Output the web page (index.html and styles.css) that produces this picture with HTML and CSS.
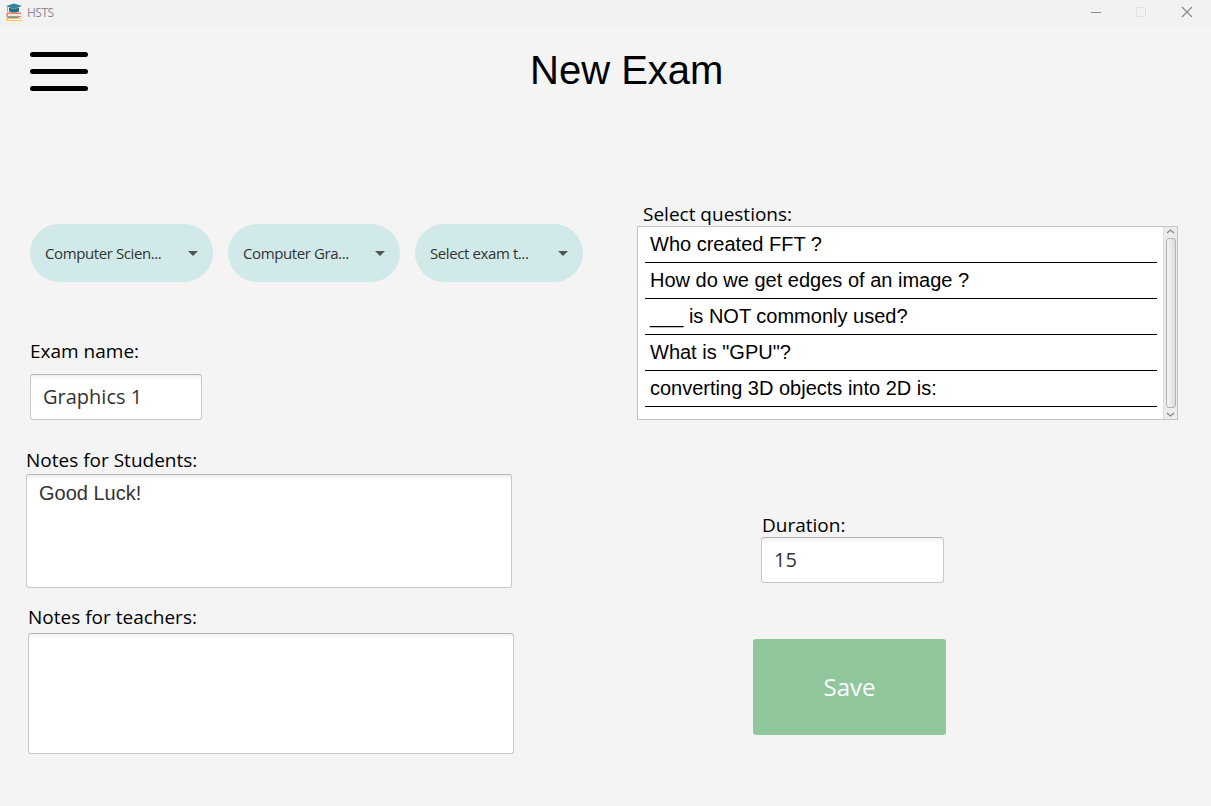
FILE: index.html
```html
<!DOCTYPE html>
<html lang="en">
<head>
<meta charset="utf-8">
<title>HSTS</title>
<link rel="stylesheet" href="styles.css">
</head>
<body>
<div class="titlebar">
  <svg class="app-icon" width="18" height="18" viewBox="0 0 18 18">
    <path d="M1 3 9 .5 17 3 9 6z" fill="#35849b"/>
    <path d="M4 4.5 9 6l5-1.500v4Q9 11 4 8.500z" fill="#276f88"/>
    <path d="M2.500 4v5" stroke="#e0a13b" stroke-width="1"/>
    <path d="M2 9.500h14v1.500H3v2h13v1H2q-1.500-2.200 0-4.500z" fill="#ee8168"/>
    <path d="M4 11h12v2H4z" fill="#f7e9dd"/>
    <path d="M2 14h12v1.500H2z" fill="#4fa79c"/>
    <path d="M1 15h16v1H3v1h14v1H1z" fill="#f2cd70"/>
    <path d="M3 16h13v1H3z" fill="#fff5d5"/>
  </svg>
  <span class="app-name">HSTS</span>
  <svg class="window-controls" width="106" height="14" viewBox="0 0 106 14" fill="none">
    <path d="M1 6.500h10" stroke="#8b8b8b"/>
    <rect x="46.500" y="1.500" width="9" height="9" rx="1" stroke="#dedede"/>
    <path d="M92 1l10 10M102 1 92 11" stroke="#888" stroke-width="1.200"/>
  </svg>
</div>
<header class="header">
  <svg class="menu" width="58" height="40" viewBox="0 0 58 40">
    <path d="M2.500 2.500h53M2.500 19.500h53M2.500 36.500h53" stroke="#000" stroke-width="5" stroke-linecap="round"/>
  </svg>
  <h1 class="title">New Exam</h1>
</header>
<main class="main">
  <section class="details">
    <div class="pickers">
      <div class="picker picker-subject"><span class="pick-a">Computer Scien...</span><i class="arrow"></i></div>
      <div class="picker picker-course"><span class="pick-b">Computer Gra...</span><i class="arrow"></i></div>
      <div class="picker picker-type"><span class="pick-c">Select exam t...</span><i class="arrow"></i></div>
    </div>
    <div class="group name-group">
      <span class="label l-name">Exam name:</span>
      <div class="field name-field"><span class="v-name">Graphics 1</span></div>
    </div>
    <div class="group students-group">
      <span class="label l-students">Notes for Students:</span>
      <div class="field students-field"><span class="v-note">Good Luck!</span></div>
    </div>
    <div class="group teachers-group">
      <span class="label l-teachers">Notes for teachers:</span>
      <div class="field teachers-field"></div>
    </div>
  </section>
  <section class="exam">
    <span class="label l-questions">Select questions:</span>
    <div class="list">
      <ul class="questions">
        <li>Who created FFT ?</li>
        <li>How do we get edges of an image ?</li>
        <li>___ is NOT commonly used?</li>
        <li>What is "GPU"?</li>
        <li>converting 3D objects into 2D is:</li>
      </ul>
      <div class="scrollbar">
        <svg width="9" height="5" viewBox="0 0 9 5"><path d="M1 4 4.500 1 8 4" fill="none" stroke="#888" stroke-width="1.300"/></svg>
        <div class="thumb"></div>
        <svg width="9" height="5" viewBox="0 0 9 5"><path d="M1 1 4.500 4 8 1" fill="none" stroke="#888" stroke-width="1.300"/></svg>
      </div>
    </div>
    <div class="duration-group">
      <span class="label l-duration">Duration:</span>
      <div class="field duration-field"><span class="v-duration">15</span></div>
    </div>
    <button class="save"><span>Save</span></button>
  </section>
</main>
</body>
</html>
```

FILE: styles.css
```css
* { box-sizing: border-box; }
body {
  margin: 0;
  height: 806px;
  overflow: hidden;
  background: #f4f4f4;
  color: #000;
  font-family: "Open Sans", sans-serif;
}
.titlebar {
  display: flex;
  height: 28px;
  padding: 3px 15px 0 5px;
  background: #f2f2f2;
}
.app-name {
  margin-left: 4px;
  font-size: 12px;
  line-height: 19px;
  letter-spacing: -0.5px;
  color: #8b8b8b;
}
.window-controls { margin: 3px 0 0 auto; }
.header {
  display: flex;
  height: 172px;
  padding: 24px 0 0 30px;
}
.title {
  margin: -5px 0 0 442px;
  font: 40px/46px "Liberation Sans", Arial, sans-serif;
  white-space: nowrap;
}
.main { display: flex; }
.details { width: 637px; padding: 24px 0 0 26px; }
.pickers { display: flex; gap: 15px; padding-left: 4px; }
.picker {
  display: flex;
  align-items: center;
  justify-content: space-between;
  height: 58px;
  padding: 0 15px;
  border-radius: 29px;
  background: #d1e9e8;
  color: #333;
  font-size: 15px;
  white-space: nowrap;
}
.picker-subject { width: 183px; }
.picker-course { width: 172px; }
.picker-type { width: 168px; }
.pick-a, .pick-b, .pick-c { letter-spacing: -0.4px; }
.arrow {
  border: 5px solid transparent;
  border-top-color: #555;
  border-bottom: 0;
}
.group { display: flex; flex-direction: column; }
.label {
  display: block;
  font-size: 19px;
  line-height: 26px;
  white-space: nowrap;
}
.field {
  border: 1px solid #c8c8c8;
  border-top-color: #b5b5b5;
  border-radius: 3px;
  background: linear-gradient(#f0f0f0, #fff 5px);
  color: #333;
  font-size: 20px;
  line-height: 44px;
  padding-left: 12px;
}
.name-group { padding: 56px 0 0 4px; }
.name-field { width: 172px; height: 46px; margin-top: 10px; }
.students-group { padding-top: 27px; }
.students-field {
  width: 486px;
  height: 114px;
  margin-top: 1px;
  font: 20px/36px "Liberation Sans", Arial, sans-serif;
}
.teachers-group { padding: 16px 0 0 2px; }
.teachers-field { width: 486px; height: 121px; margin-top: 3px; }
.l-questions { margin: 1px 0 0 6px; height: 25px; }
.list {
  display: flex;
  width: 541px;
  height: 194px;
  border: 1px solid #c3c3c3;
  background: #fff;
}
.questions {
  flex: 1;
  margin: 0 6px 0 7px;
  padding: 0;
  list-style: none;
  font: 20px/35px "Liberation Sans", Arial, sans-serif;
}
.questions li {
  height: 36px;
  padding-left: 5px;
  border-bottom: 1px solid #000;
}
.scrollbar {
  display: flex;
  flex-direction: column;
  align-items: center;
  justify-content: space-between;
  width: 14px;
  padding: 2px 1px;
  border-left: 1px solid #ddd;
  background: #ececec;
}
.thumb {
  width: 10px;
  height: 170px;
  border: 1px solid #b2b2b2;
  border-radius: 3px;
  background: linear-gradient(90deg, #f6f6f6, #dcdcdc);
}
.duration-group { padding: 92px 0 0 124px; }
.l-duration { height: 25px; padding-left: 1px; }
.duration-field { width: 183px; height: 46px; }
.save {
  display: block;
  width: 193px;
  height: 96px;
  margin: 56px 0 0 116px;
  padding: 0;
  border: 0;
  border-radius: 3px;
  background: #90c79d;
  color: #fff;
  font: 24px/96px "Open Sans", sans-serif;
}
```
